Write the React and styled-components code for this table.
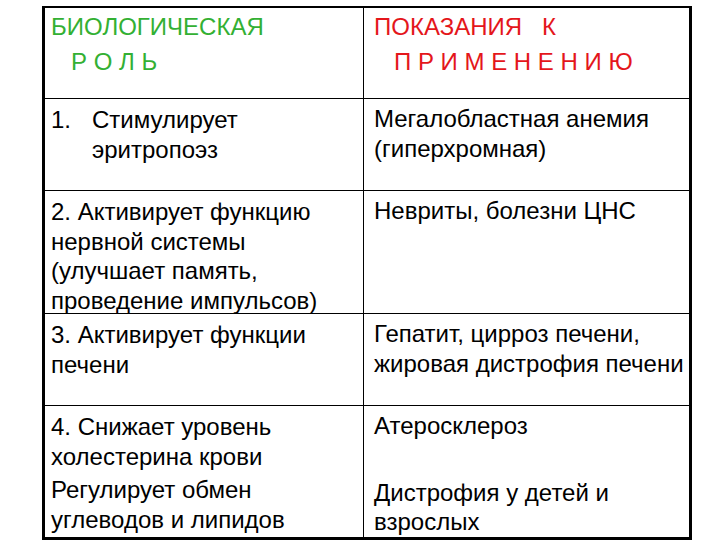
import React from "react";
import styled, { createGlobalStyle } from "styled-components";

const GlobalStyle = createGlobalStyle`
  html, body { margin: 0; padding: 0; background: #fff; }
  body { font-family: "Liberation Sans", Arial, sans-serif; }
`;

const Page = styled.div`
  padding: 6px 0 0 42px;
  width: 720px;
  height: 540px;
  box-sizing: border-box;
  overflow: hidden;
`;

const Table = styled.div`
  width: 650px;
  box-sizing: border-box;
  border-left: 3px solid #000;
  border-right: 3px solid #000;
  border-top: 2px solid #000;
  border-bottom: 3px solid #000;
  display: grid;
  grid-template-columns: 319px 1fr;
  grid-template-rows: 91px 92px 123px 92px 131px;
`;

const Cell = styled.div`
  box-sizing: border-box;
  border-bottom: ${(p) => (p.$last ? "none" : "1px solid #000")};
  border-right: ${(p) => (p.$left ? "1px solid #000" : "none")};
  padding: ${(p) => (p.$left ? "6px 4px 0 6px" : "5px 4px 0 10px")};
  font-size: 24px;
  line-height: 29.5px;
  color: #000;
`;

const HeadCell = styled(Cell)`
  padding-top: 1px;
  font-size: 24px;
  line-height: 35px;
  white-space: pre;
  color: ${(p) => p.$color};
`;

const Numbered = styled.div`
  display: flex;
`;

const Num = styled.span`
  flex: 0 0 41px;
`;

const Para = styled.div`
  margin-top: ${(p) => p.$gap || 0}px;
`;

export default function App() {
  return (
    <>
      <GlobalStyle />
      <Page>
        <Table>
          <HeadCell $left $color="#33b033">
            {"БИОЛОГИЧЕСКАЯ\n   Р О Л Ь"}
          </HeadCell>
          <HeadCell $color="#e4161b">
            {"ПОКАЗАНИЯ   К\n   П Р И М Е Н Е Н И Ю"}
          </HeadCell>

          <Cell $left>
            <Numbered>
              <Num>1.</Num>
              <span>Стимулирует эритропоэз</span>
            </Numbered>
          </Cell>
          <Cell>Мегалобластная анемия (гиперхромная)</Cell>

          <Cell $left>
            2. Активирует функцию нервной системы (улучшает память,
            проведение импульсов)
          </Cell>
          <Cell>Невриты, болезни ЦНС</Cell>

          <Cell $left>3. Активирует функции печени</Cell>
          <Cell>Гепатит, цирроз печени, жировая дистрофия печени</Cell>

          <Cell $left $last>
            <Para>4. Снижает уровень холестерина крови</Para>
            <Para $gap={4}>Регулирует обмен углеводов и липидов</Para>
          </Cell>
          <Cell $last>
            <Para>Атеросклероз</Para>
            <Para $gap={37}>Дистрофия у детей и взрослых</Para>
          </Cell>
        </Table>
      </Page>
    </>
  );
}
